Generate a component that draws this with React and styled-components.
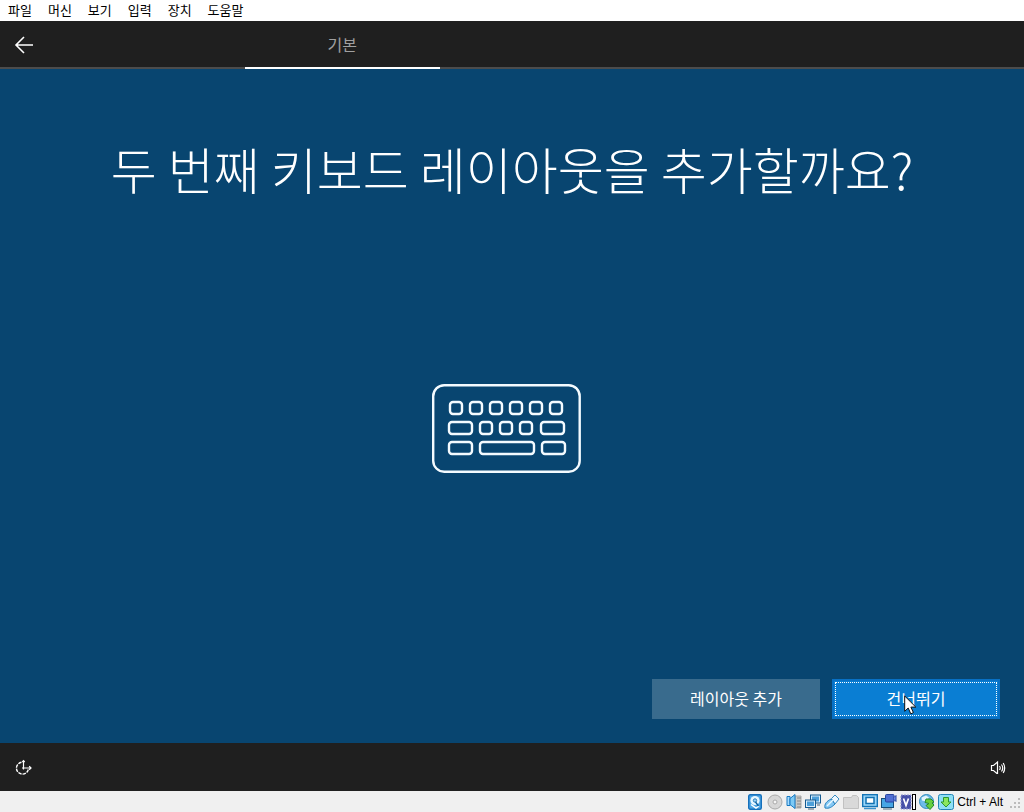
import React from "react";
import styled, { createGlobalStyle, css } from "styled-components";

const GlobalStyle = createGlobalStyle`
  * { box-sizing: border-box; }
  body {
    margin: 0;
    font-family: "Noto Sans CJK KR", "Liberation Sans", sans-serif;
  }
`;

const Window = styled.div`
  display: flex;
  flex-direction: column;
  min-height: 100vh;
`;

const MenuBar = styled.nav`
  display: flex;
  height: 21px;
  background: #fff;
`;

const MenuItem = styled.button`
  border: 0;
  padding: 0 8px 2px;
  background: transparent;
  color: #000;
  font: 13px/18px "Noto Sans CJK KR", sans-serif;
`;

const Header = styled.header`
  display: grid;
  grid-template-columns: 50px repeat(5, 1fr);
  height: 48px;
  background: #1f1f1f;
  box-shadow: inset 0 -2px #4c4c4c;
`;

const IconButton = styled.button`
  display: flex;
  align-items: center;
  justify-content: center;
  width: 48px;
  height: 48px;
  border: 0;
  padding: 0;
  background: transparent;
  color: #fff;
`;

const Tab = styled.a`
  grid-column: 3;
  border-bottom: 2px solid #fff;
  color: #a0a0a0;
  font-size: 16px;
  line-height: 46px;
  text-align: center;
  text-decoration: none;
`;

const Main = styled.main`
  display: flex;
  flex: 1;
  flex-direction: column;
  padding: 64px 24px 24px;
  background: #084570;
`;

const Title = styled.h1`
  margin: 0;
  color: #fff;
  font-size: 50px;
  font-weight: 300;
  line-height: 70px;
  text-align: center;
`;

const Illustration = styled.div`
  display: flex;
  flex: 1;
  align-items: center;
  justify-content: center;
  padding-bottom: 24px;
`;

const Actions = styled.div`
  display: flex;
  justify-content: flex-end;
  gap: 12px;
`;

const ActionButton = styled.button`
  position: relative;
  width: 168px;
  height: 40px;
  border: 0;
  padding: 0 0 2px;
  background: #396b8d;
  color: #fff;
  font: 16px/38px "Noto Sans CJK KR", sans-serif;
  ${(p) =>
    p.$primary &&
    css`
      background: #0a7ed3;
      outline: 1px dotted #fff;
      outline-offset: -4px;
      box-shadow: inset 0 0 0 2px #0870c4;
    `}
`;

const Pointer = styled.svg`
  position: absolute;
  top: 16px;
  left: 72px;
`;

const Footer = styled.footer`
  display: flex;
  justify-content: space-between;
  height: 48px;
  padding-right: 2px;
  background: #1f1f1f;
`;

const StatusBar = styled.div`
  display: flex;
  align-items: center;
  justify-content: flex-end;
  gap: 3px;
  height: 21px;
  padding-right: 3px;
  background: #f0f0f0;
`;

const HostKey = styled.span`
  margin-right: 4px;
  color: #000;
  font: 12px/20px "Liberation Sans", sans-serif;
`;

const menus = ["파일", "머신", "보기", "입력", "장치", "도움말"];

const keys = [
  [18, 18, 12], [38, 18, 12], [58, 18, 12], [78, 18, 12], [98, 18, 12], [118, 18, 12],
  [17, 38, 23], [48, 38, 12], [68, 38, 12], [88, 38, 12], [109, 38, 23],
  [17, 58, 23], [48, 58, 54], [110, 58, 23],
];

const Keyboard = () => (
  <svg width="160" height="90" viewBox="0 0 160 90" fill="none" stroke="#f4fbff" strokeWidth="2.4" aria-hidden="true">
    <rect x="1.2" y="1.2" width="146.5" height="86.5" rx="11" />
    {keys.map(([x, y, w]) => (
      <rect key={`${x}-${y}`} x={x} y={y} width={w} height="12" rx="3" />
    ))}
  </svg>
);

const BackArrow = () => (
  <svg width="20" height="18" viewBox="0 0 20 18" fill="none" stroke="#fff" strokeWidth="1.6" aria-hidden="true">
    <path d="M19 9H2M10 1L2 9l8 8" />
  </svg>
);

const EaseOfAccess = () => (
  <svg width="18" height="16" viewBox="0 0 18 16" fill="none" stroke="#fff" aria-hidden="true">
    <path d="M6.5 3.2A6 6 0 1 0 13.3 10.5" strokeWidth="1.4" strokeDasharray="3.4 1" />
    <path d="M8.5 1.5v7.5H16M7.3 3l1.2-1.4L9.7 3M14.2 7.2L16 9l-1.8 1.8M7 9h1.5v1.5" strokeWidth="1.2" />
  </svg>
);

const Speaker = () => (
  <svg width="16" height="14" viewBox="0 0 16 14" fill="none" stroke="#fff" strokeWidth="1.2" aria-hidden="true">
    <path d="M1.5 5.5h2l4-3.5v12l-4-3.5h-2zM9.5 6q1.5 2 0 4M11.5 4.5q2.5 3.5 0 7M13.2 3q3 5 0 10" />
  </svg>
);

const StatusIcon = ({ label, children }) => (
  <svg width="16" height="16" viewBox="0 0 16 16" fill="none" role="img" aria-label={label}>
    {children}
  </svg>
);

const StatusIcons = () => (
  <>
    <StatusIcon label="하드 디스크">
      <rect x=".7" y=".7" width="12.6" height="14.6" rx="1.5" fill="#4da6e6" stroke="#1670bb" strokeWidth="1.4" />
      <circle cx="7" cy="6.5" r="4.6" fill="#e8f7ff" />
      <circle cx="7" cy="6.5" r="1.7" fill="#9bd0f2" stroke="#297fbd" />
      <path d="M3 10.5l5 3.5 3-2" stroke="#fff" strokeWidth="1.5" />
      <path d="M7.5 8l3 4" stroke="#075a9c" strokeWidth="1.3" />
    </StatusIcon>
    <StatusIcon label="광 디스크">
      <circle cx="8" cy="8" r="7" fill="#d7d7d7" stroke="#aaa" />
      <circle cx="8" cy="8" r="2" fill="#f5f5f5" stroke="#aaa" />
    </StatusIcon>
    <StatusIcon label="오디오">
      <path d="M9 2h6v12H9z" fill="#c9c9c5" stroke="#aaa" />
      <path d="M11 4h4M11 7h4M11 10h4M11 13h4" stroke="#888" />
      <path d="M1 2.5h3v9H1z" fill="#a6dcff" stroke="#1679c2" />
      <path d="M4 4.5l5-4v14l-5-4z" fill="#7dcaf5" stroke="#1679c2" />
    </StatusIcon>
    <StatusIcon label="네트워크">
      <rect x="5.5" y="1" width="10" height="8" fill="#dceefa" stroke="#155a90" />
      <path d="M7 2.5h7v5H7z" fill="#4c9fd9" />
      <rect x=".5" y="6" width="10" height="7.5" fill="#dceefa" stroke="#155a90" />
      <path d="M2 7.5h7v4.5H2z" fill="#4c9fd9" />
      <path d="M3 15h6M12 11h3" stroke="#4c6477" />
    </StatusIcon>
    <StatusIcon label="USB">
      <path d="M1 14c-1-4 2-7 6-9l4 5c-3 3-6 5-10 4z" fill="#85c8f4" stroke="#237fbd" />
      <path d="M7.5 4.5L11 1l4 4-4 5z" fill="#eef8ff" stroke="#388bc1" />
      <path d="M3 12l6-6" stroke="#e9f9ff" strokeWidth="1.5" />
    </StatusIcon>
    <StatusIcon label="공유 폴더">
      <path d="M.5 3.5h8l1-2h4l2 2v11H.5z" fill="#d9d9d9" stroke="#c1c1c1" />
    </StatusIcon>
    <StatusIcon label="디스플레이">
      <rect x=".7" y=".7" width="14.6" height="11.8" fill="#9ad7fb" stroke="#1474b6" strokeWidth="1.4" />
      <rect x="4" y="3.5" width="8" height="6" fill="#fff" stroke="#1271b1" strokeWidth="1.5" />
      <path d="M2 14.5h12" stroke="#3c92cd" strokeWidth="1.5" />
    </StatusIcon>
    <StatusIcon label="녹화">
      <rect x=".5" y="4.5" width="12" height="9" fill="#48a6e5" stroke="#174e78" />
      <path d="M2 15h9" stroke="#567083" />
      <rect x="4.5" y=".5" width="8.5" height="7.5" rx="1" fill="#506fd3" stroke="#2844a0" />
      <path d="M13 3.5l2-2v6l-2-2" fill="#718deb" stroke="#2844a0" />
    </StatusIcon>
    <StatusIcon label="가상화">
      <rect x="1" y="1" width="10" height="14" fill="#4650a8" stroke="#9298cf" strokeDasharray="2 1" />
      <path d="M3.5 4.5L6 11.5l2.5-7" stroke="#fff" strokeWidth="1.7" />
      <rect x="12.5" y=".5" width="3" height="15" fill="#fff" stroke="#000" />
    </StatusIcon>
    <StatusIcon label="마우스 통합">
      <circle cx="7.5" cy="7.5" r="7" fill="#6dbbe9" stroke="#308bbd" />
      <path d="M2.5 3.5L7 1.5l3 2-3 4-4-1z" fill="#e4f5fd" />
      <path d="M7 5h5l3 3-2 1 2 2-4 4.5-4-4 3-2-4-1z" fill="#67ce3e" stroke="#25892d" />
    </StatusIcon>
    <StatusIcon label="키보드 캡처">
      <rect x=".5" y=".5" width="15" height="15" rx="2" fill="#8edff4" stroke="#2385b6" />
      <path d="M5.5 3.5h5V8H13l-5 5-5-5h2.5z" fill="#8be65d" stroke="#2b972e" />
    </StatusIcon>
  </>
);

const ResizeGrip = () => (
  <svg width="11" height="12" viewBox="0 0 11 12" fill="#bcbcbc" aria-hidden="true">
    <path d="M8 2h2v2H8zM8 6h2v2H8zM8 10h2v2H8zM4 6h2v2H4zM4 10h2v2H4zM0 10h2v2H0z" />
  </svg>
);

export default function App() {
  return (
    <Window>
      <GlobalStyle />
      <MenuBar aria-label="메뉴">
        {menus.map((name) => (
          <MenuItem key={name} type="button">{name}</MenuItem>
        ))}
      </MenuBar>
      <Header>
        <IconButton type="button" aria-label="뒤로"><BackArrow /></IconButton>
        <Tab href="#basic" aria-current="page">기본</Tab>
      </Header>
      <Main>
        <Title>두 번째 키보드 레이아웃을 추가할까요?</Title>
        <Illustration><Keyboard /></Illustration>
        <Actions>
          <ActionButton type="button">레이아웃 추가</ActionButton>
          <ActionButton type="button" $primary>
            건너뛰기
            <Pointer width="13" height="20" viewBox="0 0 13 20" aria-hidden="true">
              <path d="M.7 1v15.3l3.5-3.3 2.6 5.8 2.6-1.2-2.5-5.5h4.9z" fill="#fff" stroke="#111" />
            </Pointer>
          </ActionButton>
        </Actions>
      </Main>
      <Footer>
        <IconButton type="button" aria-label="접근성"><EaseOfAccess /></IconButton>
        <IconButton type="button" aria-label="볼륨"><Speaker /></IconButton>
      </Footer>
      <StatusBar>
        <StatusIcons />
        <HostKey>Ctrl + Alt</HostKey>
        <ResizeGrip />
      </StatusBar>
    </Window>
  );
}
